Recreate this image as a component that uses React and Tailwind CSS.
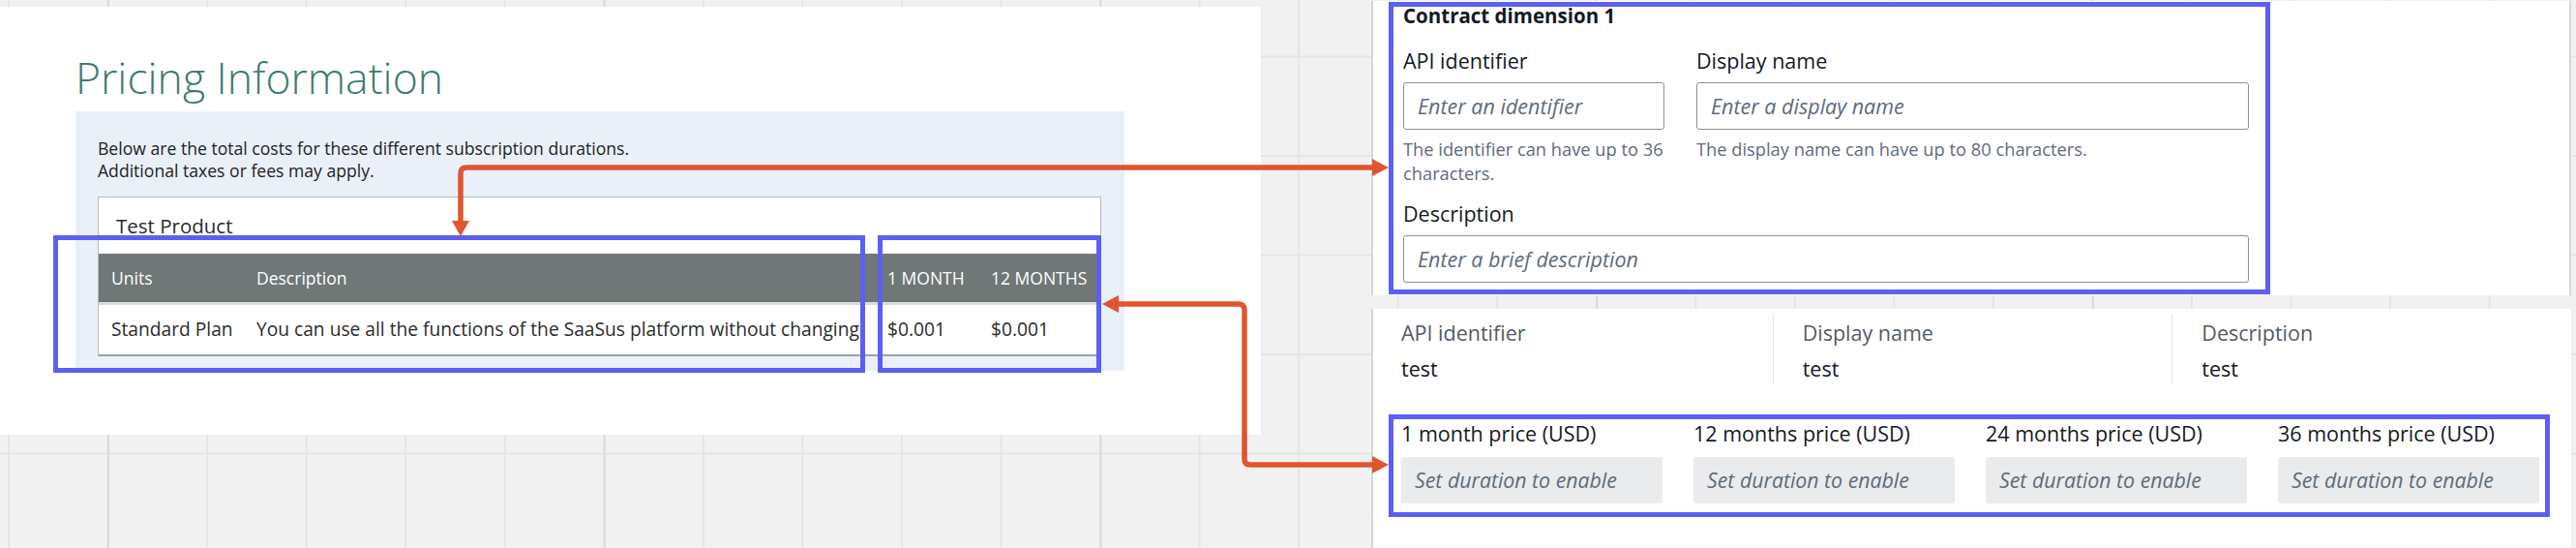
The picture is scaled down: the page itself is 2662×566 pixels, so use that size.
import React from 'react';

// annotated screenshot: AWS pricing preview on the left, dimension form on the right
const priceCols = ['1 month price (USD)', '12 months price (USD)', '24 months price (USD)', '36 months price (USD)'];
const infoCols = [
  { label: 'API identifier', value: 'test' },
  { label: 'Display name', value: 'test' },
  { label: 'Description', value: 'test' },
];

const inputCls =
  'block h-[49px] w-full rounded-[3px] border-[1.5px] border-[#8d9096] bg-white px-[14px] text-[21.5px] italic text-[#16191f] outline-none placeholder:text-[#5f6b7a]';

function PricingCard() {
  return (
    <div className="mt-[7px] h-[442px] w-[1303px] shrink-0 bg-white pl-[78px] pt-[44px]">
      <h1 className="text-[44.5px] font-light leading-[58px] text-[#3f7b72]">Pricing Information</h1>
      <div className="mt-[6px] w-[1084px] bg-[#e9f0f8] pb-[15px] pl-[23px] pr-[24px] pt-[27px]">
        <p className="text-[17.6px] leading-[23px] text-[#232323]">
          Below are the total costs for these different subscription durations.
          <br />
          Additional taxes or fees may apply.
        </p>
        <div className="mt-[15px] border border-b-2 border-[#b7bcc0] border-b-[#9ea3a7] bg-white text-[#2b2b2b]">
          <div className="pl-[18px] pt-[15px] text-[20.5px] leading-[28px]">Test Product</div>
          {/* header */}
          <div className="mt-[15px] flex h-[53px] items-center border-b-[3px] border-[#dcdcdc] bg-[#6f7777] text-[17.5px] font-medium text-white">
            <div className="w-[150px] pl-[13px]">Units</div>
            <div className="w-[652px] pl-[13px]">Description</div>
            <div className="w-[107px] pl-[13px]">1 MONTH</div>
            <div className="flex-1 pl-[13px]">12 MONTHS</div>
          </div>
          {/* row */}
          <div className="flex h-[51px] items-center text-[19.2px]">
            <div className="w-[150px] whitespace-nowrap pl-[13px]">Standard Plan</div>
            <div className="w-[652px] overflow-hidden whitespace-nowrap pl-[13px] pr-[13px]">
              You can use all the functions of the SaaSus platform without changing
            </div>
            <div className="w-[107px] pl-[13px]">$0.001</div>
            <div className="flex-1 pl-[13px]">$0.001</div>
          </div>
        </div>
      </div>
    </div>
  );
}

function DimensionForm() {
  return (
    <div className="h-[304px] border-l-2 border-r-2 border-[#d6d6d6] bg-white pl-[31px] pt-[3px] text-[#16191f]">
      <div className="text-[20.5px] font-bold leading-[24px]">Contract dimension 1</div>
      <div className="mt-[21px] flex w-[874px] gap-[33px]">
        <div className="w-[270px] shrink-0">
          <div className="text-[21.5px] font-medium leading-[28px]">API identifier</div>
          <input readOnly className={`mt-[8px] ${inputCls}`} placeholder="Enter an identifier" />
          <div className="mt-[7px] text-[18.3px] leading-[25px] text-[#5f6b7a]">
            The identifier can have up to 36 characters.
          </div>
        </div>
        <div className="flex-1">
          <div className="text-[21.5px] font-medium leading-[28px]">Display name</div>
          <input readOnly className={`mt-[8px] ${inputCls}`} placeholder="Enter a display name" />
          <div className="mt-[7px] text-[18.3px] leading-[25px] text-[#5f6b7a]">
            The display name can have up to 80 characters.
          </div>
        </div>
      </div>
      <div className="mt-[16px] w-[874px]">
        <div className="text-[21.5px] font-medium leading-[28px]">Description</div>
        <input readOnly className={`mt-[8px] ${inputCls}`} placeholder="Enter a brief description" />
      </div>
    </div>
  );
}

function DimensionSummary() {
  return (
    <div className="mt-[14px] flex-1 border-l-2 border-[#d6d6d6] bg-white pt-[5px]">
      <div className="grid grid-cols-3">
        {infoCols.map((c, i) => (
          <div
            key={c.label}
            className={`h-[73px] pt-[6px] ${i > 0 ? 'border-l border-[#e4e6e8] pl-[30px]' : 'pl-[29px]'}`}
          >
            <div className="text-[21.5px] leading-[28px] text-[#545b64]">{c.label}</div>
            <div className="mt-[9px] text-[21.5px] leading-[28px] text-[#16191f]">{c.value}</div>
          </div>
        ))}
      </div>
      <div className="mt-[37px] flex gap-[32px] pl-[29px]">
        {priceCols.map((p) => (
          <div key={p} className="w-[270px]">
            <div className="whitespace-nowrap text-[21.5px] leading-[28px] text-[#16191f]">{p}</div>
            <div className="mt-[10px] flex h-[48px] items-center rounded-[3px] bg-[#eaebec] pl-[14px] text-[21.3px] italic text-[#5f6b7a]">
              Set duration to enable
            </div>
          </div>
        ))}
      </div>
    </div>
  );
}

export default function App() {
  return (
    <div className="relative h-[566px] w-[2662px] overflow-hidden bg-[#f1f1f1] font-['Open_Sans',sans-serif] [background-image:linear-gradient(to_right,#dadada_2px,transparent_2px),linear-gradient(to_right,#e5e5e5_2px,transparent_2px),linear-gradient(to_bottom,#e5e5e5_2px,transparent_2px)] [background-position:111px_0,8px_0,0_-45px] [background-size:512.75px_100%,102.55px_100%,100%_102.5px]">
      <div className="flex items-start">
        <PricingCard />
        <div className="ml-[114px] mt-[1px] flex h-[565px] w-[1240px] flex-col">
          <DimensionForm />
          <DimensionSummary />
        </div>
      </div>

      {/* annotations drawn over the screenshot */}
      <svg className="pointer-events-none absolute inset-0" width="2662" height="566" viewBox="0 0 2662 566">
        <g fill="none" stroke="#5e5ff2" strokeWidth="5">
          <rect x="57.5" y="245.5" width="834" height="137" />
          <rect x="909.5" y="245.5" width="226" height="137" />
          <rect x="1437.5" y="4.5" width="906" height="297" />
          <rect x="1437.5" y="430.5" width="1195" height="101" />
        </g>
        <g fill="none" stroke="#e0552f" strokeWidth="5.5" strokeLinejoin="round">
          <path d="M476 230 V179 Q476 173 482 173 H1420" />
          <path d="M1154 314 H1280 Q1286 314 1286 320 V474 Q1286 480 1292 480 H1420" />
        </g>
        <g fill="#e0552f">
          <polygon points="467,228 485,228 476,244" />
          <polygon points="1418,164 1418,182 1435,173" />
          <polygon points="1156,305 1156,323 1139,314" />
          <polygon points="1418,471 1418,489 1435,480" />
        </g>
      </svg>
    </div>
  );
}
